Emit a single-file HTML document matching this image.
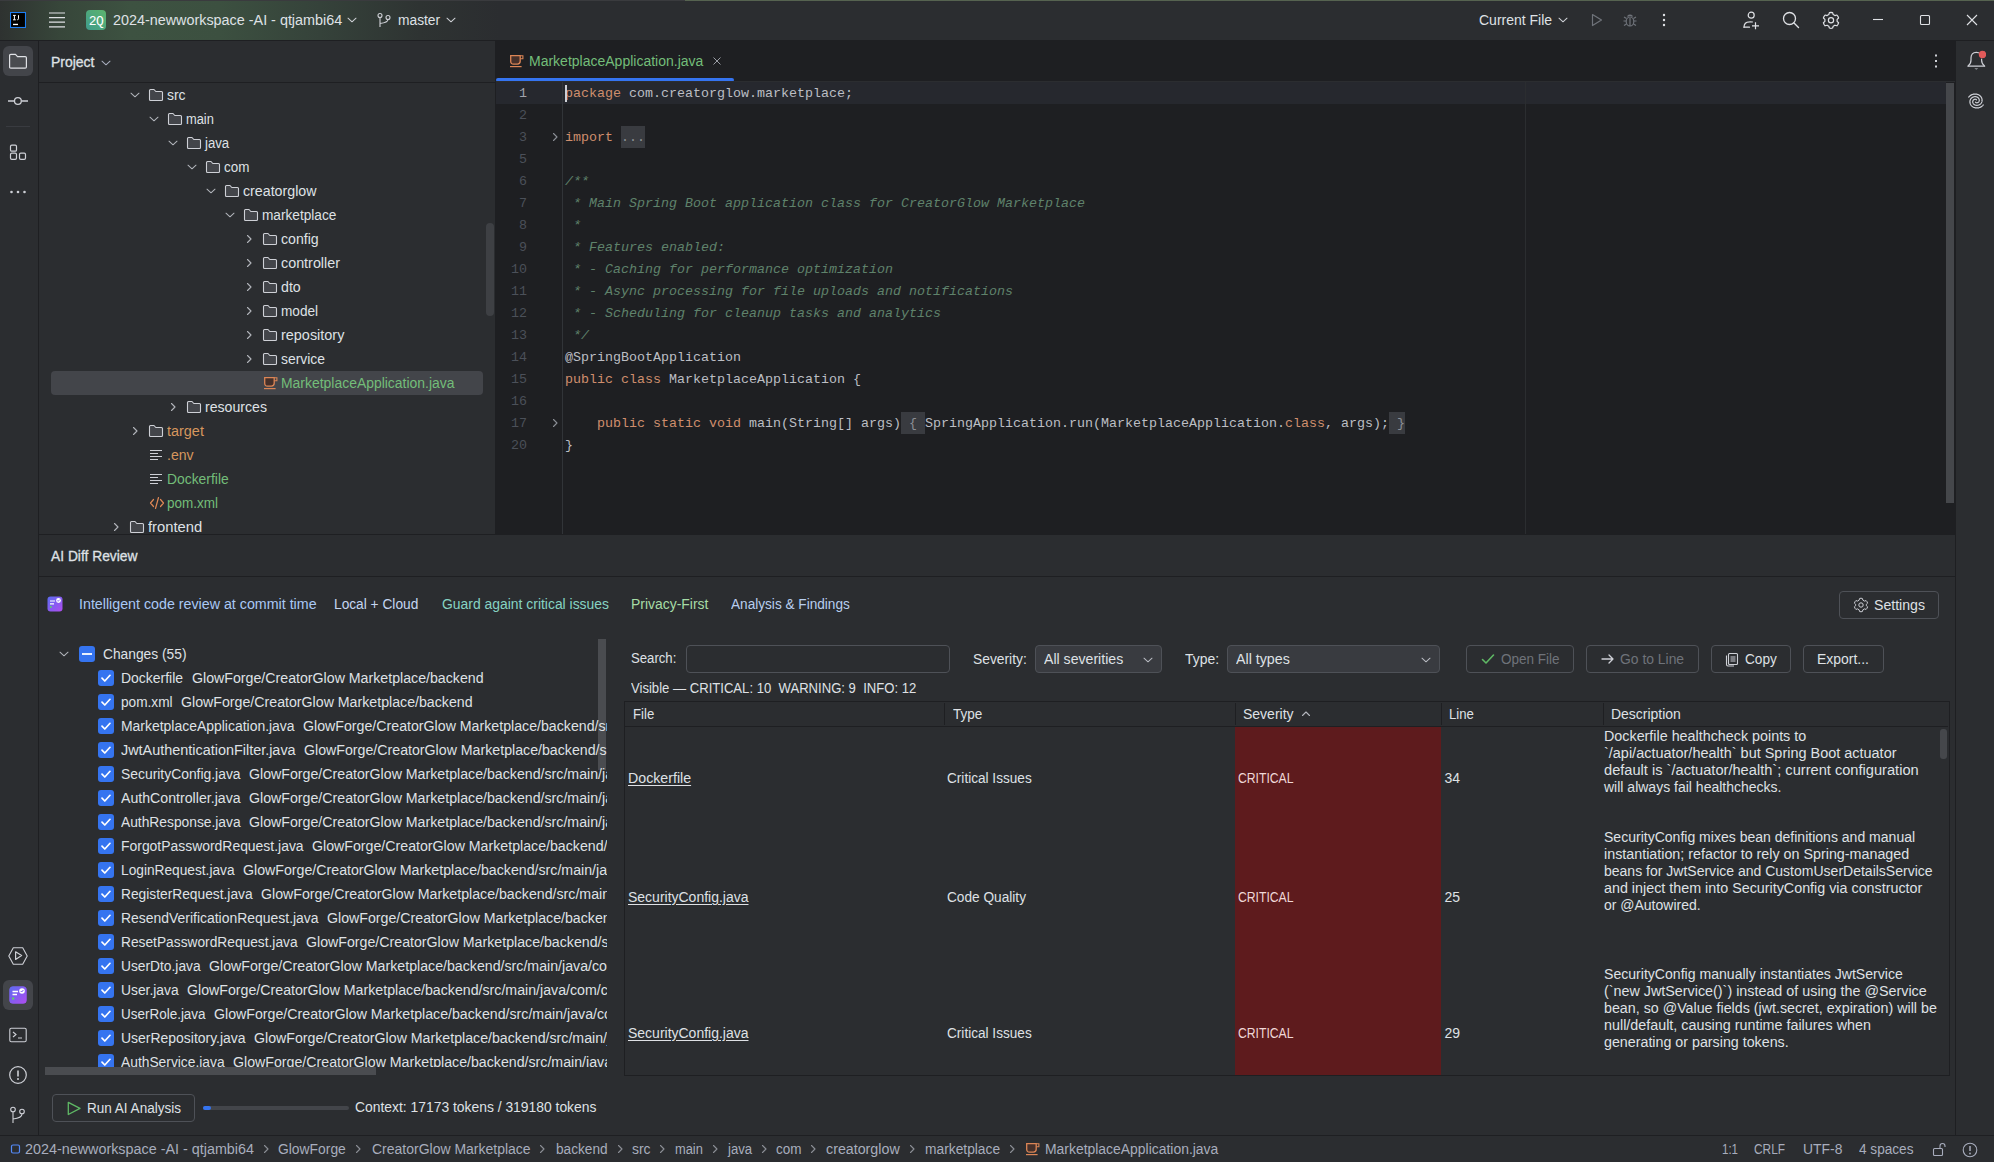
<!DOCTYPE html><html><head><meta charset="utf-8"><style>
html,body{margin:0;padding:0}
body{width:1994px;height:1162px;overflow:hidden;position:relative;background:#2B2D30;font-family:'Liberation Sans',sans-serif;font-size:14px;color:#DFE1E5}
.r{position:absolute;display:block}
.t{position:absolute;white-space:pre;line-height:20px;height:20px}
.m{position:absolute;white-space:pre;line-height:22px;height:22px;font-family:'Liberation Mono',monospace;font-size:13.33px}
u{text-decoration:underline;text-underline-offset:2px}
</style></head><body>
<div class="r" style="left:0;top:0;width:1994px;height:40px;background:linear-gradient(to right, #2E3230 0px, #37463A 60px, #3D5241 130px, #3C5040 220px, #35423A 320px, #2E3332 420px, #2B2D30 500px)"></div>
<div class="r" style="left:0px;top:40px;width:1994px;height:1px;background:#1E1F22;"></div>
<div class="r" style="left:0px;top:0px;width:685px;height:1px;background:#3A3B3E;"></div>
<div class="r" style="left:685px;top:0px;width:1309px;height:1px;background:#566350;"></div>
<svg class="r" style="left:10px;top:12px" width="16" height="16" viewBox="0 0 16 16" fill="none"><rect x="0.5" y="0.5" width="15" height="15" fill="#000" stroke="#1C7EF5" stroke-width="1.1"/><path d="M3 3.4 H5.8 M4.4 3.4 V7.8 M3 7.8 H5.8 M8.5 3.2 V6.8 Q8.5 7.8 7.3 7.8" stroke="#fff" stroke-width="1"/><rect x="3" y="11.8" width="5" height="1.3" fill="#fff"/></svg>
<svg class="r" style="left:49px;top:12px" width="16" height="16" viewBox="0 0 16 16" fill="none"><path d="M0 1 H16 M0 5.6 H16 M0 10.2 H16 M0 14.8 H16" stroke="#DFE1E5" stroke-width="1.2"/></svg>
<div class="r" style="left:86px;top:10px;width:20px;height:20px;border-radius:4px;background:linear-gradient(45deg,#3F9C8C,#5DB46D)"></div>
<div class="t" style="left:86px;top:11.5px;color:#FFFFFF;font-size:13px;width:20px;text-align:center;letter-spacing:-0.6px;font-family:Liberation Mono,monospace;">2Q</div>
<div class="t" id="f0" style="left:112.5px;top:10px;color:#DFE1E5;font-size:14px;;transform:scaleX(1.0262);transform-origin:0 50%;">2024-newworkspace -AI - qtjambi64</div>
<svg class="r" style="left:346px;top:14px" width="12" height="12" viewBox="0 0 12 12" fill="none"><path d="M2 4.2 L6 7.8 L10 4.2" stroke="#CED0D6" stroke-width="1.05" stroke-linecap="round" stroke-linejoin="round"/></svg>
<svg class="r" style="left:376px;top:12px" width="16" height="16" viewBox="0 0 16 16" fill="none"><circle cx="4" cy="3.5" r="2" stroke="#CED0D6" stroke-width="1.1"/><circle cx="12" cy="5.5" r="2" stroke="#CED0D6" stroke-width="1.1"/><path d="M4 5.5 V15 M12 7.5 Q12 10.5 4 11.5" stroke="#CED0D6" stroke-width="1.1"/></svg>
<div class="t" id="f1" style="left:398.4px;top:10px;color:#DFE1E5;font-size:14px;;transform:scaleX(0.9837);transform-origin:0 50%;">master</div>
<svg class="r" style="left:445px;top:14px" width="12" height="12" viewBox="0 0 12 12" fill="none"><path d="M2 4.2 L6 7.8 L10 4.2" stroke="#CED0D6" stroke-width="1.05" stroke-linecap="round" stroke-linejoin="round"/></svg>
<div class="t" style="left:1479px;top:10px;color:#DFE1E5;font-size:14px;;">Current File</div>
<svg class="r" style="left:1557px;top:14px" width="12" height="12" viewBox="0 0 12 12" fill="none"><path d="M2 4.2 L6 7.8 L10 4.2" stroke="#CED0D6" stroke-width="1.05" stroke-linecap="round" stroke-linejoin="round"/></svg>
<svg class="r" style="left:1588px;top:12px" width="16" height="16" viewBox="0 0 16 16" fill="none"><path d="M4.5 2.5 L13.5 8 L4.5 13.5 Z" stroke="#6F737A" stroke-width="1.2" stroke-linejoin="round"/></svg>
<svg class="r" style="left:1622px;top:12px" width="16" height="16" viewBox="0 0 16 16" fill="none"><ellipse cx="8" cy="9.5" rx="3.8" ry="4.5" stroke="#6F737A" stroke-width="1.2"/><path d="M5.5 4.5 Q8 2 10.5 4.5 M1.5 9 H4 M12 9 H14.5 M2 5 L4.5 6.5 M14 5 L11.5 6.5 M2 13.5 L4.5 12 M14 13.5 L11.5 12 M8 6 V14" stroke="#6F737A" stroke-width="1.2"/></svg>
<svg class="r" style="left:1656px;top:12px" width="16" height="16" viewBox="0 0 16 16" fill="none"><circle cx="8" cy="3" r="1.2" fill="#DFE1E5"/><circle cx="8" cy="8" r="1.2" fill="#DFE1E5"/><circle cx="8" cy="13" r="1.2" fill="#DFE1E5"/></svg>
<svg class="r" style="left:1742px;top:10px" width="20" height="20" viewBox="0 0 20 20" fill="none"><circle cx="9.2" cy="5.2" r="3" stroke="#DFE1E5" stroke-width="1.2"/><path d="M2 17.2 Q2 12 7.5 11.8 Q9 11.7 10.5 12" stroke="#DFE1E5" stroke-width="1.2" stroke-linecap="round"/><path d="M2 17.2 H7.5" stroke="#DFE1E5" stroke-width="1.2" stroke-linecap="round"/><path d="M10 15.8 H17 M13.5 12.3 V19.3" stroke="#DFE1E5" stroke-width="1.2"/></svg>
<svg class="r" style="left:1782px;top:11px" width="18" height="18" viewBox="0 0 18 18" fill="none"><circle cx="7.5" cy="7.5" r="6" stroke="#DFE1E5" stroke-width="1.3"/><path d="M12 12 L16.5 16.5" stroke="#DFE1E5" stroke-width="1.4" stroke-linecap="round"/></svg>
<svg class="r" style="left:1822px;top:11px" width="18" height="18" viewBox="0 0 18 18" fill="none"><path d="M9 1.3 L10.6 1.6 L11.2 3.6 L12.9 4.6 L14.9 4 L15.9 5.3 L16.6 7 L15.1 8.4 V10.4 L16.6 11.8 L15.9 13.5 L14.9 14.8 L12.9 14.2 L11.2 15.2 L10.6 17 L9 17.3 L7.4 17 L6.8 15.2 L5.1 14.2 L3.1 14.8 L2.1 13.5 L1.4 11.8 L2.9 10.4 V8.4 L1.4 7 L2.1 5.3 L3.1 4 L5.1 4.6 L6.8 3.6 L7.4 1.6 Z" stroke="#DFE1E5" stroke-width="1.2" stroke-linejoin="round"/><circle cx="9" cy="9.3" r="2.6" stroke="#DFE1E5" stroke-width="1.2"/></svg>
<svg class="r" style="left:1870px;top:12px" width="16" height="16" viewBox="0 0 16 16" fill="none"><path d="M3 7.5 H13" stroke="#DFE1E5" stroke-width="1.1"/></svg>
<svg class="r" style="left:1916px;top:12px" width="16" height="16" viewBox="0 0 16 16" fill="none"><rect x="4.5" y="3.5" width="9" height="9" rx="1" stroke="#DFE1E5" stroke-width="1.1"/></svg>
<svg class="r" style="left:1963px;top:12px" width="16" height="16" viewBox="0 0 16 16" fill="none"><path d="M4 3 L14 13 M14 3 L4 13" stroke="#DFE1E5" stroke-width="1.1"/></svg>
<div class="r" style="left:38px;top:41px;width:1px;height:1094px;background:#1E1F22;"></div>
<div class="r" style="left:3px;top:46px;width:30px;height:30px;background:#43454A;border-radius:6px"></div>
<svg class="r" style="left:9px;top:53px" width="18" height="16" viewBox="0 0 18 16" fill="none"><path d="M0.6 2.6 Q0.6 1.4 1.8 1.4 H6.5 L8.5 3.6 H16.2 Q17.4 3.6 17.4 4.8 V14 Q17.4 15.2 16.2 15.2 H1.8 Q0.6 15.2 0.6 14 Z" fill="#4A4C50" stroke="#DFE1E5" stroke-width="1.2" stroke-linejoin="round"/></svg>
<svg class="r" style="left:8px;top:93px" width="20" height="16" viewBox="0 0 20 16" fill="none"><path d="M0 8 H6.2 M13.6 8 H20" stroke="#CED0D6" stroke-width="1.3"/><circle cx="9.9" cy="8" r="3.4" stroke="#CED0D6" stroke-width="1.3"/></svg>
<div class="r" style="left:6px;top:126px;width:24px;height:1px;background:#393B40;"></div>
<svg class="r" style="left:9px;top:144px" width="18" height="17" viewBox="0 0 18 17" fill="none"><rect x="1.5" y="1.2" width="6" height="6" rx="1.3" stroke="#CED0D6" stroke-width="1.2"/><rect x="1.5" y="9.2" width="6" height="6.2" rx="1.3" stroke="#CED0D6" stroke-width="1.2"/><rect x="10.5" y="9.2" width="6" height="6.2" rx="1.3" stroke="#CED0D6" stroke-width="1.2"/></svg>
<svg class="r" style="left:9px;top:184px" width="20" height="16" viewBox="0 0 20 16" fill="none"><circle cx="2.5" cy="8" r="1.3" fill="#CED0D6"/><circle cx="9" cy="8" r="1.3" fill="#CED0D6"/><circle cx="15.5" cy="8" r="1.3" fill="#CED0D6"/></svg>
<svg class="r" style="left:8px;top:946px" width="20" height="20" viewBox="0 0 20 20" fill="none"><path d="M5.3 1.8 H14.7 L19.2 10 L14.7 18.2 H5.3 L0.8 10 Z" stroke="#CED0D6" stroke-width="1.1" stroke-linejoin="round"/><path d="M7.6 5.8 L13.6 9.6 L7.6 13.4 Z" stroke="#CED0D6" stroke-width="1.2" stroke-linejoin="round"/></svg>
<div class="r" style="left:3px;top:980px;width:30px;height:30px;background:#43454A;border-radius:6px"></div>
<svg class="r" style="left:9px;top:986px" width="18" height="18" viewBox="0 0 18 18" fill="none"><rect x="0.5" y="0.5" width="17" height="17" rx="3.5" fill="#8A5CF6"/><rect x="0.5" y="0.5" width="17" height="17" rx="3.5" fill="url(#g1)"/><defs><linearGradient id="g1" x1="0" y1="0" x2="1" y2="1"><stop offset="0" stop-color="#5B6CF0"/><stop offset="1" stop-color="#B04CF0"/></linearGradient></defs><path d="M3.5 5.5 H9 M3.5 8.5 H8" stroke="#fff" stroke-width="1.3"/><circle cx="13" cy="5" r="2.8" fill="#fff"/><path d="M11.7 5 L12.7 6 L14.4 4" stroke="#7B5CF0" stroke-width="1"/><circle cx="4.2" cy="12.5" r="1.2" fill="#5FD068"/></svg>
<svg class="r" style="left:9px;top:1027px" width="18" height="16" viewBox="0 0 18 16" fill="none"><rect x="0.8" y="1.3" width="16.4" height="13.4" rx="1.5" stroke="#CED0D6" stroke-width="1.1"/><path d="M4 5 L7 7.5 L4 10 M9 11 H13" stroke="#CED0D6" stroke-width="1.1"/></svg>
<svg class="r" style="left:9px;top:1066px" width="18" height="18" viewBox="0 0 18 18" fill="none"><circle cx="9" cy="9" r="8.3" stroke="#CED0D6" stroke-width="1.2"/><path d="M9 4.5 V10.5" stroke="#CED0D6" stroke-width="1.6"/><circle cx="9" cy="13" r="1" fill="#CED0D6"/></svg>
<svg class="r" style="left:9px;top:1106px" width="18" height="18" viewBox="0 0 18 18" fill="none"><circle cx="4" cy="3.5" r="2.3" stroke="#CED0D6" stroke-width="1.1"/><circle cx="13" cy="5.5" r="2.3" stroke="#CED0D6" stroke-width="1.1"/><path d="M4 6 V17 M13 8 Q13 12 4 13" stroke="#CED0D6" stroke-width="1.1"/></svg>
<div class="r" style="left:39px;top:41px;width:456px;height:494px;background:#2B2D30;"></div>
<div class="t" id="f2" style="left:51.3px;top:52px;color:#DFE1E5;font-size:14px;-webkit-text-stroke:0.3px #DFE1E5;transform:scaleX(0.9982);transform-origin:0 50%;">Project</div>
<svg class="r" style="left:100px;top:56.5px" width="12" height="12" viewBox="0 0 12 12" fill="none"><path d="M2 4.2 L6 7.8 L10 4.2" stroke="#A8ADBD" stroke-width="1.05" stroke-linecap="round" stroke-linejoin="round"/></svg>
<div class="r" style="left:39px;top:82px;width:456px;height:1px;background:#1E1F22;"></div>
<div class="r" style="left:51px;top:371px;width:432px;height:24px;background:#43454A;border-radius:4px"></div>
<div class="r" style="left:39px;top:83px;width:456px;height:451px;overflow:hidden">
<svg class="r" style="left:90px;top:6px" width="12" height="12" viewBox="0 0 12 12" fill="none"><path d="M2 4.2 L6 7.8 L10 4.2" stroke="#B2B5BB" stroke-width="1.05" stroke-linecap="round" stroke-linejoin="round"/></svg>
<svg class="r" style="left:109px;top:4px" width="16" height="16" viewBox="0 0 16 16" fill="none"><path d="M1.5 3.5 Q1.5 2.5 2.5 2.5 H6 L7.8 4.5 H13.5 Q14.5 4.5 14.5 5.5 V12.5 Q14.5 13.5 13.5 13.5 H2.5 Q1.5 13.5 1.5 12.5 Z" fill="#43454A" stroke="#CED0D6" stroke-width="1.1" stroke-linejoin="round"/></svg>
<div class="t" id="f3" style="left:128px;top:2px;color:#DFE1E5;font-size:14px;;transform:scaleX(0.9962);transform-origin:0 50%;">src</div>
<svg class="r" style="left:109px;top:30px" width="12" height="12" viewBox="0 0 12 12" fill="none"><path d="M2 4.2 L6 7.8 L10 4.2" stroke="#B2B5BB" stroke-width="1.05" stroke-linecap="round" stroke-linejoin="round"/></svg>
<svg class="r" style="left:128px;top:28px" width="16" height="16" viewBox="0 0 16 16" fill="none"><path d="M1.5 3.5 Q1.5 2.5 2.5 2.5 H6 L7.8 4.5 H13.5 Q14.5 4.5 14.5 5.5 V12.5 Q14.5 13.5 13.5 13.5 H2.5 Q1.5 13.5 1.5 12.5 Z" fill="#43454A" stroke="#CED0D6" stroke-width="1.1" stroke-linejoin="round"/></svg>
<div class="t" id="f4" style="left:147px;top:26px;color:#DFE1E5;font-size:14px;;transform:scaleX(0.9190);transform-origin:0 50%;">main</div>
<svg class="r" style="left:128px;top:54px" width="12" height="12" viewBox="0 0 12 12" fill="none"><path d="M2 4.2 L6 7.8 L10 4.2" stroke="#B2B5BB" stroke-width="1.05" stroke-linecap="round" stroke-linejoin="round"/></svg>
<svg class="r" style="left:147px;top:52px" width="16" height="16" viewBox="0 0 16 16" fill="none"><path d="M1.5 3.5 Q1.5 2.5 2.5 2.5 H6 L7.8 4.5 H13.5 Q14.5 4.5 14.5 5.5 V12.5 Q14.5 13.5 13.5 13.5 H2.5 Q1.5 13.5 1.5 12.5 Z" fill="#43454A" stroke="#CED0D6" stroke-width="1.1" stroke-linejoin="round"/></svg>
<div class="t" id="f5" style="left:166px;top:50px;color:#DFE1E5;font-size:14px;;transform:scaleX(0.9421);transform-origin:0 50%;">java</div>
<svg class="r" style="left:147px;top:78px" width="12" height="12" viewBox="0 0 12 12" fill="none"><path d="M2 4.2 L6 7.8 L10 4.2" stroke="#B2B5BB" stroke-width="1.05" stroke-linecap="round" stroke-linejoin="round"/></svg>
<svg class="r" style="left:166px;top:76px" width="16" height="16" viewBox="0 0 16 16" fill="none"><path d="M1.5 3.5 Q1.5 2.5 2.5 2.5 H6 L7.8 4.5 H13.5 Q14.5 4.5 14.5 5.5 V12.5 Q14.5 13.5 13.5 13.5 H2.5 Q1.5 13.5 1.5 12.5 Z" fill="#43454A" stroke="#CED0D6" stroke-width="1.1" stroke-linejoin="round"/></svg>
<div class="t" id="f6" style="left:185px;top:74px;color:#DFE1E5;font-size:14px;;transform:scaleX(0.9602);transform-origin:0 50%;">com</div>
<svg class="r" style="left:166px;top:102px" width="12" height="12" viewBox="0 0 12 12" fill="none"><path d="M2 4.2 L6 7.8 L10 4.2" stroke="#B2B5BB" stroke-width="1.05" stroke-linecap="round" stroke-linejoin="round"/></svg>
<svg class="r" style="left:185px;top:100px" width="16" height="16" viewBox="0 0 16 16" fill="none"><path d="M1.5 3.5 Q1.5 2.5 2.5 2.5 H6 L7.8 4.5 H13.5 Q14.5 4.5 14.5 5.5 V12.5 Q14.5 13.5 13.5 13.5 H2.5 Q1.5 13.5 1.5 12.5 Z" fill="#43454A" stroke="#CED0D6" stroke-width="1.1" stroke-linejoin="round"/></svg>
<div class="t" id="f7" style="left:204px;top:98px;color:#DFE1E5;font-size:14px;;transform:scaleX(1.0155);transform-origin:0 50%;">creatorglow</div>
<svg class="r" style="left:185px;top:126px" width="12" height="12" viewBox="0 0 12 12" fill="none"><path d="M2 4.2 L6 7.8 L10 4.2" stroke="#B2B5BB" stroke-width="1.05" stroke-linecap="round" stroke-linejoin="round"/></svg>
<svg class="r" style="left:204px;top:124px" width="16" height="16" viewBox="0 0 16 16" fill="none"><path d="M1.5 3.5 Q1.5 2.5 2.5 2.5 H6 L7.8 4.5 H13.5 Q14.5 4.5 14.5 5.5 V12.5 Q14.5 13.5 13.5 13.5 H2.5 Q1.5 13.5 1.5 12.5 Z" fill="#43454A" stroke="#CED0D6" stroke-width="1.1" stroke-linejoin="round"/></svg>
<div class="t" id="f8" style="left:223px;top:122px;color:#DFE1E5;font-size:14px;;transform:scaleX(0.9742);transform-origin:0 50%;">marketplace</div>
<svg class="r" style="left:204px;top:150px" width="12" height="12" viewBox="0 0 12 12" fill="none"><path d="M4.5 2.5 L8 6 L4.5 9.5" stroke="#B2B5BB" stroke-width="1.1" stroke-linecap="round" stroke-linejoin="round"/></svg>
<svg class="r" style="left:223px;top:148px" width="16" height="16" viewBox="0 0 16 16" fill="none"><path d="M1.5 3.5 Q1.5 2.5 2.5 2.5 H6 L7.8 4.5 H13.5 Q14.5 4.5 14.5 5.5 V12.5 Q14.5 13.5 13.5 13.5 H2.5 Q1.5 13.5 1.5 12.5 Z" fill="#43454A" stroke="#CED0D6" stroke-width="1.1" stroke-linejoin="round"/></svg>
<div class="t" id="f9" style="left:242px;top:146px;color:#DFE1E5;font-size:14px;;transform:scaleX(1.0091);transform-origin:0 50%;">config</div>
<svg class="r" style="left:204px;top:174px" width="12" height="12" viewBox="0 0 12 12" fill="none"><path d="M4.5 2.5 L8 6 L4.5 9.5" stroke="#B2B5BB" stroke-width="1.1" stroke-linecap="round" stroke-linejoin="round"/></svg>
<svg class="r" style="left:223px;top:172px" width="16" height="16" viewBox="0 0 16 16" fill="none"><path d="M1.5 3.5 Q1.5 2.5 2.5 2.5 H6 L7.8 4.5 H13.5 Q14.5 4.5 14.5 5.5 V12.5 Q14.5 13.5 13.5 13.5 H2.5 Q1.5 13.5 1.5 12.5 Z" fill="#43454A" stroke="#CED0D6" stroke-width="1.1" stroke-linejoin="round"/></svg>
<div class="t" id="f10" style="left:242px;top:170px;color:#DFE1E5;font-size:14px;;transform:scaleX(1.0244);transform-origin:0 50%;">controller</div>
<svg class="r" style="left:204px;top:198px" width="12" height="12" viewBox="0 0 12 12" fill="none"><path d="M4.5 2.5 L8 6 L4.5 9.5" stroke="#B2B5BB" stroke-width="1.1" stroke-linecap="round" stroke-linejoin="round"/></svg>
<svg class="r" style="left:223px;top:196px" width="16" height="16" viewBox="0 0 16 16" fill="none"><path d="M1.5 3.5 Q1.5 2.5 2.5 2.5 H6 L7.8 4.5 H13.5 Q14.5 4.5 14.5 5.5 V12.5 Q14.5 13.5 13.5 13.5 H2.5 Q1.5 13.5 1.5 12.5 Z" fill="#43454A" stroke="#CED0D6" stroke-width="1.1" stroke-linejoin="round"/></svg>
<div class="t" id="f11" style="left:242px;top:194px;color:#DFE1E5;font-size:14px;;transform:scaleX(1.0119);transform-origin:0 50%;">dto</div>
<svg class="r" style="left:204px;top:222px" width="12" height="12" viewBox="0 0 12 12" fill="none"><path d="M4.5 2.5 L8 6 L4.5 9.5" stroke="#B2B5BB" stroke-width="1.1" stroke-linecap="round" stroke-linejoin="round"/></svg>
<svg class="r" style="left:223px;top:220px" width="16" height="16" viewBox="0 0 16 16" fill="none"><path d="M1.5 3.5 Q1.5 2.5 2.5 2.5 H6 L7.8 4.5 H13.5 Q14.5 4.5 14.5 5.5 V12.5 Q14.5 13.5 13.5 13.5 H2.5 Q1.5 13.5 1.5 12.5 Z" fill="#43454A" stroke="#CED0D6" stroke-width="1.1" stroke-linejoin="round"/></svg>
<div class="t" id="f12" style="left:242px;top:218px;color:#DFE1E5;font-size:14px;;transform:scaleX(0.9727);transform-origin:0 50%;">model</div>
<svg class="r" style="left:204px;top:246px" width="12" height="12" viewBox="0 0 12 12" fill="none"><path d="M4.5 2.5 L8 6 L4.5 9.5" stroke="#B2B5BB" stroke-width="1.1" stroke-linecap="round" stroke-linejoin="round"/></svg>
<svg class="r" style="left:223px;top:244px" width="16" height="16" viewBox="0 0 16 16" fill="none"><path d="M1.5 3.5 Q1.5 2.5 2.5 2.5 H6 L7.8 4.5 H13.5 Q14.5 4.5 14.5 5.5 V12.5 Q14.5 13.5 13.5 13.5 H2.5 Q1.5 13.5 1.5 12.5 Z" fill="#43454A" stroke="#CED0D6" stroke-width="1.1" stroke-linejoin="round"/></svg>
<div class="t" id="f13" style="left:242px;top:242px;color:#DFE1E5;font-size:14px;;transform:scaleX(1.0314);transform-origin:0 50%;">repository</div>
<svg class="r" style="left:204px;top:270px" width="12" height="12" viewBox="0 0 12 12" fill="none"><path d="M4.5 2.5 L8 6 L4.5 9.5" stroke="#B2B5BB" stroke-width="1.1" stroke-linecap="round" stroke-linejoin="round"/></svg>
<svg class="r" style="left:223px;top:268px" width="16" height="16" viewBox="0 0 16 16" fill="none"><path d="M1.5 3.5 Q1.5 2.5 2.5 2.5 H6 L7.8 4.5 H13.5 Q14.5 4.5 14.5 5.5 V12.5 Q14.5 13.5 13.5 13.5 H2.5 Q1.5 13.5 1.5 12.5 Z" fill="#43454A" stroke="#CED0D6" stroke-width="1.1" stroke-linejoin="round"/></svg>
<div class="t" id="f14" style="left:242px;top:266px;color:#DFE1E5;font-size:14px;;transform:scaleX(0.9919);transform-origin:0 50%;">service</div>
<svg class="r" style="left:224px;top:292px" width="16" height="16" viewBox="0 0 16 16" fill="none"><path d="M1.7 2.7 H11.2 V8.3 Q11.2 11.1 8.4 11.1 H4.5 Q1.7 11.1 1.7 8.3 Z" stroke="#DB8556" stroke-width="1.3" fill="#45302A"/><path d="M11.2 2.7 H13.9 V5.7 H11.2" stroke="#DB8556" stroke-width="1.1"/><path d="M1 13.6 H12.6" stroke="#DB8556" stroke-width="1.2"/></svg>
<div class="t" id="f15" style="left:242px;top:290px;color:#73BD79;font-size:14px;;transform:scaleX(0.9952);transform-origin:0 50%;">MarketplaceApplication.java</div>
<svg class="r" style="left:128px;top:318px" width="12" height="12" viewBox="0 0 12 12" fill="none"><path d="M4.5 2.5 L8 6 L4.5 9.5" stroke="#B2B5BB" stroke-width="1.1" stroke-linecap="round" stroke-linejoin="round"/></svg>
<svg class="r" style="left:147px;top:316px" width="16" height="16" viewBox="0 0 16 16" fill="none"><path d="M1.5 3.5 Q1.5 2.5 2.5 2.5 H6 L7.8 4.5 H13.5 Q14.5 4.5 14.5 5.5 V12.5 Q14.5 13.5 13.5 13.5 H2.5 Q1.5 13.5 1.5 12.5 Z" fill="#43454A" stroke="#CED0D6" stroke-width="1.1" stroke-linejoin="round"/></svg>
<div class="t" id="f16" style="left:166px;top:314px;color:#DFE1E5;font-size:14px;;transform:scaleX(1.0086);transform-origin:0 50%;">resources</div>
<svg class="r" style="left:90px;top:342px" width="12" height="12" viewBox="0 0 12 12" fill="none"><path d="M4.5 2.5 L8 6 L4.5 9.5" stroke="#B2B5BB" stroke-width="1.1" stroke-linecap="round" stroke-linejoin="round"/></svg>
<svg class="r" style="left:109px;top:340px" width="16" height="16" viewBox="0 0 16 16" fill="none"><path d="M1.5 3.5 Q1.5 2.5 2.5 2.5 H6 L7.8 4.5 H13.5 Q14.5 4.5 14.5 5.5 V12.5 Q14.5 13.5 13.5 13.5 H2.5 Q1.5 13.5 1.5 12.5 Z" fill="#43454A" stroke="#CED0D6" stroke-width="1.1" stroke-linejoin="round"/></svg>
<div class="t" id="f17" style="left:128px;top:338px;color:#D6975E;font-size:14px;;transform:scaleX(1.0304);transform-origin:0 50%;">target</div>
<svg class="r" style="left:110px;top:364px" width="16" height="16" viewBox="0 0 16 16" fill="none"><path d="M1 3.5 H13 M1 6.5 H9 M1 9.5 H13 M1 12.5 H9" stroke="#CED0D6" stroke-width="1.1"/></svg>
<div class="t" id="f18" style="left:128px;top:362px;color:#D6975E;font-size:14px;;transform:scaleX(1.0050);transform-origin:0 50%;">.env</div>
<svg class="r" style="left:110px;top:388px" width="16" height="16" viewBox="0 0 16 16" fill="none"><path d="M1 3.5 H13 M1 6.5 H9 M1 9.5 H13 M1 12.5 H9" stroke="#CED0D6" stroke-width="1.1"/></svg>
<div class="t" id="f19" style="left:128px;top:386px;color:#73BD79;font-size:14px;;transform:scaleX(0.9912);transform-origin:0 50%;">Dockerfile</div>
<svg class="r" style="left:110px;top:412px" width="16" height="16" viewBox="0 0 16 16" fill="none"><path d="M4.5 4.5 L1.5 8 L4.5 11.5 M11.5 4.5 L14.5 8 L11.5 11.5 M9.5 2.5 L6.5 13.5" stroke="#E08855" stroke-width="1.2" stroke-linecap="round" stroke-linejoin="round"/></svg>
<div class="t" id="f20" style="left:128px;top:410px;color:#73BD79;font-size:14px;;transform:scaleX(0.9640);transform-origin:0 50%;">pom.xml</div>
<svg class="r" style="left:71px;top:438px" width="12" height="12" viewBox="0 0 12 12" fill="none"><path d="M4.5 2.5 L8 6 L4.5 9.5" stroke="#B2B5BB" stroke-width="1.1" stroke-linecap="round" stroke-linejoin="round"/></svg>
<svg class="r" style="left:90px;top:436px" width="16" height="16" viewBox="0 0 16 16" fill="none"><path d="M1.5 3.5 Q1.5 2.5 2.5 2.5 H6 L7.8 4.5 H13.5 Q14.5 4.5 14.5 5.5 V12.5 Q14.5 13.5 13.5 13.5 H2.5 Q1.5 13.5 1.5 12.5 Z" fill="#43454A" stroke="#CED0D6" stroke-width="1.1" stroke-linejoin="round"/></svg>
<div class="t" id="f21" style="left:109px;top:434px;color:#DFE1E5;font-size:14px;;transform:scaleX(1.0569);transform-origin:0 50%;">frontend</div>
</div>
<div class="r" style="left:486px;top:223px;width:8px;height:93px;background:#3E4044;border-radius:4px"></div>
<div class="r" style="left:495px;top:41px;width:1px;height:494px;background:#1E1F22;"></div>
<div class="r" style="left:496px;top:41px;width:1459px;height:494px;background:#1E1F22;"></div>
<svg class="r" style="left:509px;top:53px" width="16" height="16" viewBox="0 0 16 16" fill="none"><path d="M1.7 2.7 H11.2 V8.3 Q11.2 11.1 8.4 11.1 H4.5 Q1.7 11.1 1.7 8.3 Z" stroke="#DB8556" stroke-width="1.3" fill="#45302A"/><path d="M11.2 2.7 H13.9 V5.7 H11.2" stroke="#DB8556" stroke-width="1.1"/><path d="M1 13.6 H12.6" stroke="#DB8556" stroke-width="1.2"/></svg>
<div class="t" style="left:529px;top:51px;color:#73BD79;font-size:14px;;">MarketplaceApplication.java</div>
<svg class="r" style="left:711px;top:55px" width="12" height="12" viewBox="0 0 12 12" fill="none"><path d="M2.5 2.5 L9.5 9.5 M9.5 2.5 L2.5 9.5" stroke="#9A9DA5" stroke-width="1"/></svg>
<div class="r" style="left:496px;top:78px;width:238px;height:4px;background:#3574F0;border-radius:2px"></div>
<div class="r" style="left:496px;top:81px;width:1459px;height:1px;background:#2B2D30;"></div>
<svg class="r" style="left:1928px;top:53px" width="16" height="16" viewBox="0 0 16 16" fill="none"><rect x="7" y="1.5" width="2" height="2" fill="#CED0D6"/><rect x="7" y="7" width="2" height="2" fill="#CED0D6"/><rect x="7" y="12.5" width="2" height="2" fill="#CED0D6"/></svg>
<div class="r" style="left:496px;top:82px;width:1450px;height:22px;background:#26282E;"></div>
<div class="r" style="left:562px;top:82px;width:1px;height:452px;background:#313438;"></div>
<div class="r" style="left:1525px;top:82px;width:1px;height:452px;background:#2B2D30;"></div>
<div class="r" style="left:1946px;top:83px;width:8px;height:420px;background:#45474B;border-radius:0"></div>
<div class="m" style="left:480px;width:47px;text-align:right;top:83px;color:#A1A3AB">1</div>
<div class="m" style="left:480px;width:47px;text-align:right;top:105px;color:#4B5059">2</div>
<div class="m" style="left:480px;width:47px;text-align:right;top:127px;color:#4B5059">3</div>
<div class="m" style="left:480px;width:47px;text-align:right;top:149px;color:#4B5059">5</div>
<div class="m" style="left:480px;width:47px;text-align:right;top:171px;color:#4B5059">6</div>
<div class="m" style="left:480px;width:47px;text-align:right;top:193px;color:#4B5059">7</div>
<div class="m" style="left:480px;width:47px;text-align:right;top:215px;color:#4B5059">8</div>
<div class="m" style="left:480px;width:47px;text-align:right;top:237px;color:#4B5059">9</div>
<div class="m" style="left:480px;width:47px;text-align:right;top:259px;color:#4B5059">10</div>
<div class="m" style="left:480px;width:47px;text-align:right;top:281px;color:#4B5059">11</div>
<div class="m" style="left:480px;width:47px;text-align:right;top:303px;color:#4B5059">12</div>
<div class="m" style="left:480px;width:47px;text-align:right;top:325px;color:#4B5059">13</div>
<div class="m" style="left:480px;width:47px;text-align:right;top:347px;color:#4B5059">14</div>
<div class="m" style="left:480px;width:47px;text-align:right;top:369px;color:#4B5059">15</div>
<div class="m" style="left:480px;width:47px;text-align:right;top:391px;color:#4B5059">16</div>
<div class="m" style="left:480px;width:47px;text-align:right;top:413px;color:#4B5059">17</div>
<div class="m" style="left:480px;width:47px;text-align:right;top:435px;color:#4B5059">20</div>
<div class="m" style="left:565px;top:83px"><span style="color:#CF8E6D;">package</span><span style="color:#BCBEC4;"> com.creatorglow.marketplace;</span></div>
<div class="r" style="left:565px;top:85px;width:2px;height:17px;background:#CED0D6;"></div>
<div class="m" style="left:565px;top:127px"><span style="color:#CF8E6D;">import</span><span style="color:#BCBEC4;"> </span></div>
<div class="r" style="left:621px;top:126px;width:24px;height:22px;background:#393B40;"></div>
<div class="m" style="left:621px;top:127px"><span style="color:#8C8F96;">...</span></div>
<svg class="r" style="left:549px;top:131px" width="12" height="12" viewBox="0 0 12 12" fill="none"><path d="M4.5 2.5 L8 6 L4.5 9.5" stroke="#8C8F96" stroke-width="1.1" stroke-linecap="round" stroke-linejoin="round"/></svg>
<div class="m" style="left:565px;top:171px"><span style="color:#5F826B;font-style:italic;">/**</span></div>
<div class="m" style="left:565px;top:193px"><span style="color:#5F826B;font-style:italic;"> * Main Spring Boot application class for CreatorGlow Marketplace</span></div>
<div class="m" style="left:565px;top:215px"><span style="color:#5F826B;font-style:italic;"> *</span></div>
<div class="m" style="left:565px;top:237px"><span style="color:#5F826B;font-style:italic;"> * Features enabled:</span></div>
<div class="m" style="left:565px;top:259px"><span style="color:#5F826B;font-style:italic;"> * - Caching for performance optimization</span></div>
<div class="m" style="left:565px;top:281px"><span style="color:#5F826B;font-style:italic;"> * - Async processing for file uploads and notifications</span></div>
<div class="m" style="left:565px;top:303px"><span style="color:#5F826B;font-style:italic;"> * - Scheduling for cleanup tasks and analytics</span></div>
<div class="m" style="left:565px;top:325px"><span style="color:#5F826B;font-style:italic;"> */</span></div>
<div class="m" style="left:565px;top:347px"><span style="color:#BCBEC4;">@SpringBootApplication</span></div>
<div class="m" style="left:565px;top:369px"><span style="color:#CF8E6D;">public</span><span style="color:#BCBEC4;"> </span><span style="color:#CF8E6D;">class</span><span style="color:#BCBEC4;"> MarketplaceApplication {</span></div>
<div class="r" style="left:901px;top:412px;width:24px;height:22px;background:#393B40;"></div>
<div class="r" style="left:1389px;top:412px;width:16px;height:22px;background:#393B40;"></div>
<div class="m" style="left:565px;top:413px"><span style="color:#BCBEC4;">    </span><span style="color:#CF8E6D;">public</span><span style="color:#BCBEC4;"> </span><span style="color:#CF8E6D;">static</span><span style="color:#BCBEC4;"> </span><span style="color:#CF8E6D;">void</span><span style="color:#BCBEC4;"> main(String[] args) </span><span style="color:#8C8F96;">{</span><span style="color:#BCBEC4;"> SpringApplication.run(MarketplaceApplication.</span><span style="color:#CF8E6D;">class</span><span style="color:#BCBEC4;">, args);</span><span style="color:#8C8F96;"> }</span></div>
<svg class="r" style="left:549px;top:417px" width="12" height="12" viewBox="0 0 12 12" fill="none"><path d="M4.5 2.5 L8 6 L4.5 9.5" stroke="#8C8F96" stroke-width="1.1" stroke-linecap="round" stroke-linejoin="round"/></svg>
<div class="m" style="left:565px;top:435px"><span style="color:#BCBEC4;">}</span></div>
<div class="r" style="left:1955px;top:41px;width:1px;height:1094px;background:#1E1F22;"></div>
<div class="r" style="left:1956px;top:41px;width:38px;height:1094px;background:#2B2D30;"></div>
<svg class="r" style="left:1966px;top:50px" width="20" height="22" viewBox="0 0 20 22" fill="none"><path d="M2.3 15.8 Q5 13.8 5 10 V8 Q5 2.4 10.3 2.4 Q11.5 2.4 12.6 2.8 M15.6 9 V10 Q15.6 13.8 18.3 15.8" fill="none" stroke="#CED0D6" stroke-width="1.2" stroke-linejoin="round" stroke-linecap="round"/><path d="M2 16.2 H18.6" stroke="#CED0D6" stroke-width="1.3" stroke-linecap="round"/><path d="M8.3 18.6 Q10.3 20.2 12.3 18.6 Z" fill="#CED0D6"/><circle cx="16.5" cy="4.5" r="3.7" fill="#E25A5A"/></svg>
<svg class="r" style="left:1967px;top:92px" width="18" height="18" viewBox="0 0 18 18" fill="none"><path d="M1.73 5.09 L2.06 4.70 L2.41 4.33 L2.79 3.98 L3.19 3.66 L3.61 3.37 L4.04 3.10 L4.49 2.86 L4.95 2.65 L5.42 2.47 L5.90 2.33 L6.39 2.21 L6.88 2.12 L7.37 2.06 L7.86 2.03 L8.34 2.03 L8.83 2.06 L9.30 2.12 L9.77 2.20 L10.22 2.32 L10.67 2.45 L11.10 2.62 L11.51 2.81 L11.91 3.02 L12.29 3.25 L12.64 3.51 L12.98 3.78 L13.30 4.07 L13.59 4.37 L13.85 4.69 L14.09 5.02 L14.31 5.37 L14.50 5.72 L14.66 6.08 L14.80 6.45 L14.91 6.82 L14.99 7.19 L15.05 7.56 L15.08 7.94 L15.08 8.31 L15.06 8.67 L15.01 9.03 L14.94 9.39 L14.84 9.73 L14.72 10.07 L14.58 10.39 L14.42 10.70 L14.23 11.00 L14.03 11.28 L13.82 11.55 L13.58 11.80 L13.33 12.04 L13.07 12.25 L12.80 12.45 L12.51 12.63 L12.22 12.79 L11.92 12.93 L11.61 13.05 L11.30 13.14 L10.99 13.22 L10.68 13.28 L10.36 13.32 L10.05 13.34 L9.74 13.34 L9.43 13.32 L9.13 13.28 L8.84 13.23 L8.56 13.16 L8.28 13.07 L8.02 12.96 L7.76 12.85 L7.52 12.71 L7.29 12.57 L7.08 12.41 L6.88 12.24 L6.69 12.07 L6.52 11.88 L6.37 11.69 L6.23 11.49 L6.11 11.28 L6.01 11.07 L5.92 10.86 L5.85 10.65 L5.79 10.43 L5.75 10.22 L5.73 10.01 L5.73 9.80 L5.74 9.59 L5.76 9.39 L5.80 9.19 L5.85 9.00 L5.91 8.82 L5.99 8.64 L6.08 8.47 L6.18 8.31 L6.29 8.16 L6.40 8.02 L6.53 7.90 L6.66 7.78 L6.80 7.67 L6.94 7.57 L7.09 7.49 L7.24 7.42 L7.39 7.36 L7.54 7.31 L7.70 7.27 L7.85 7.24 L8.00 7.22 L8.15 7.22 L8.29 7.22 L8.43 7.23 L8.57 7.26 L8.70 7.29 L8.82 7.33 L8.94 7.37 L9.05 7.43 L9.15 7.49 L9.25 7.55 L9.33 7.62 L9.41 7.70 L9.48 7.78 M16.27 12.91 L15.94 13.30 L15.59 13.67 L15.21 14.02 L14.81 14.34 L14.39 14.63 L13.96 14.90 L13.51 15.14 L13.05 15.35 L12.58 15.53 L12.10 15.67 L11.61 15.79 L11.12 15.88 L10.63 15.94 L10.14 15.97 L9.66 15.97 L9.17 15.94 L8.70 15.88 L8.23 15.80 L7.78 15.68 L7.33 15.55 L6.90 15.38 L6.49 15.19 L6.09 14.98 L5.71 14.75 L5.36 14.49 L5.02 14.22 L4.70 13.93 L4.41 13.63 L4.15 13.31 L3.91 12.98 L3.69 12.63 L3.50 12.28 L3.34 11.92 L3.20 11.55 L3.09 11.18 L3.01 10.81 L2.95 10.44 L2.92 10.06 L2.92 9.69 L2.94 9.33 L2.99 8.97 L3.06 8.61 L3.16 8.27 L3.28 7.93 L3.42 7.61 L3.58 7.30 L3.77 7.00 L3.97 6.72 L4.18 6.45 L4.42 6.20 L4.67 5.96 L4.93 5.75 L5.20 5.55 L5.49 5.37 L5.78 5.21 L6.08 5.07 L6.39 4.95 L6.70 4.86 L7.01 4.78 L7.32 4.72 L7.64 4.68 L7.95 4.66 L8.26 4.66 L8.57 4.68 L8.87 4.72 L9.16 4.77 L9.44 4.84 L9.72 4.93 L9.98 5.04 L10.24 5.15 L10.48 5.29 L10.71 5.43 L10.92 5.59 L11.12 5.76 L11.31 5.93 L11.48 6.12 L11.63 6.31 L11.77 6.51 L11.89 6.72 L11.99 6.93 L12.08 7.14 L12.15 7.35 L12.21 7.57 L12.25 7.78 L12.27 7.99 L12.27 8.20 L12.26 8.41 L12.24 8.61 L12.20 8.81 L12.15 9.00 L12.09 9.18 L12.01 9.36 L11.92 9.53 L11.82 9.69 L11.71 9.84 L11.60 9.98 L11.47 10.10 L11.34 10.22 L11.20 10.33 L11.06 10.43 L10.91 10.51 L10.76 10.58 L10.61 10.64 L10.46 10.69 L10.30 10.73 L10.15 10.76 L10.00 10.78 L9.85 10.78 L9.71 10.78 L9.57 10.77 L9.43 10.74 L9.30 10.71 L9.18 10.67 L9.06 10.63 L8.95 10.57 L8.85 10.51 L8.75 10.45 L8.67 10.38 L8.59 10.30 L8.52 10.22" stroke="#CED0D6" stroke-width="1.2" stroke-linecap="round"/></svg>
<div class="r" style="left:39px;top:534px;width:1916px;height:1px;background:#1E1F22;"></div>
<div class="r" style="left:39px;top:535px;width:1916px;height:600px;background:#2B2D30;"></div>
<div class="t" id="f22" style="left:51px;top:546px;color:#DFE1E5;font-size:14px;-webkit-text-stroke:0.3px #DFE1E5;transform:scaleX(0.9866);transform-origin:0 50%;">AI Diff Review</div>
<div class="r" style="left:39px;top:576px;width:1916px;height:1px;background:#1E1F22;"></div>
<svg class="r" style="left:47px;top:596px" width="16" height="16" viewBox="0 0 16 16" fill="none"><defs><linearGradient id="g2" x1="0" y1="0" x2="1" y2="1"><stop offset="0" stop-color="#5B6CF0"/><stop offset="1" stop-color="#B04CF0"/></linearGradient></defs><rect x="0.5" y="0.5" width="15" height="15" rx="3" fill="url(#g2)"/><path d="M3 5 H8 M3 7.8 H7" stroke="#fff" stroke-width="1.2"/><circle cx="11.5" cy="4.5" r="2.4" fill="#fff"/><path d="M10.4 4.5 L11.2 5.3 L12.6 3.7" stroke="#7B5CF0" stroke-width="0.9"/><circle cx="3.8" cy="11" r="1" fill="#5FD068"/></svg>
<div class="t" id="f23" style="left:79.4px;top:594px;color:#A9C8F5;font-size:14px;;transform:scaleX(1.0178);transform-origin:0 50%;">Intelligent code review at commit time</div>
<div class="t" id="f24" style="left:334.2px;top:594px;color:#C5D6F2;font-size:14px;;transform:scaleX(0.9801);transform-origin:0 50%;">Local + Cloud</div>
<div class="t" id="f25" style="left:441.5px;top:594px;color:#86D3C3;font-size:14px;;transform:scaleX(0.9936);transform-origin:0 50%;">Guard againt critical issues</div>
<div class="t" id="f26" style="left:631px;top:594px;color:#A6DCA6;font-size:14px;;transform:scaleX(0.9951);transform-origin:0 50%;">Privacy-First</div>
<div class="t" id="f27" style="left:731.4px;top:594px;color:#B8CEEE;font-size:14px;;transform:scaleX(0.9724);transform-origin:0 50%;">Analysis &amp; Findings</div>
<div class="r" style="left:1839px;top:591px;width:98px;height:26px;border:1px solid #4E5157;border-radius:4px"></div>
<svg class="r" style="left:1853px;top:597px" width="16" height="16" viewBox="0 0 16 16" fill="none"><path d="M8 1.2 L9.4 1.5 L9.9 3.2 L11.4 4.1 L13.1 3.6 L14 4.7 L14.6 6.2 L13.3 7.4 V8.6 L14.6 9.8 L14 11.3 L13.1 12.4 L11.4 11.9 L9.9 12.8 L9.4 14.5 L8 14.8 L6.6 14.5 L6.1 12.8 L4.6 11.9 L2.9 12.4 L2 11.3 L1.4 9.8 L2.7 8.6 V7.4 L1.4 6.2 L2 4.7 L2.9 3.6 L4.6 4.1 L6.1 3.2 L6.6 1.5 Z" stroke="#CED0D6" stroke-width="1" stroke-linejoin="round"/><circle cx="8" cy="8" r="2.2" stroke="#CED0D6" stroke-width="1"/></svg>
<div class="t" id="f28" style="left:1873.5px;top:595px;color:#DFE1E5;font-size:14px;;transform:scaleX(1.0080);transform-origin:0 50%;">Settings</div>
<svg class="r" style="left:58px;top:648px" width="12" height="12" viewBox="0 0 12 12" fill="none"><path d="M2 4.2 L6 7.8 L10 4.2" stroke="#B2B5BB" stroke-width="1.05" stroke-linecap="round" stroke-linejoin="round"/></svg>
<svg class="r" style="left:79px;top:646px" width="16" height="16" viewBox="0 0 16 16" fill="none"><rect x="0" y="0" width="16" height="16" rx="3" fill="#3574F0"/><path d="M3 8 H13" stroke="#fff" stroke-width="1.8"/></svg>
<div class="t" id="f29" style="left:102.5px;top:644px;color:#DFE1E5;font-size:14px;;transform:scaleX(0.9843);transform-origin:0 50%;">Changes (55)</div>
<div class="r" style="left:598px;top:639px;width:8px;height:131px;background:#4A4C50;"></div>
<div class="r" style="left:39px;top:666px;width:568px;height:401px;overflow:hidden">
<svg class="r" style="left:59px;top:4px" width="16" height="16" viewBox="0 0 16 16" fill="none"><rect x="0" y="0" width="16" height="16" rx="3" fill="#3574F0"/><path d="M4 8.2 L6.8 11 L12 5.3" stroke="#fff" stroke-width="1.7" stroke-linecap="round" stroke-linejoin="round"/></svg>
<div class="t" id="f30" style="left:82.4px;top:2px;color:#DFE1E5;font-size:14px;;transform:scaleX(0.9976);transform-origin:0 50%;">Dockerfile</div>
<div class="t" id="f_pathref" style="left:153px;top:2px;color:#DFE1E5;transform:scaleX(1.0128);transform-origin:0 50%">GlowForge/CreatorGlow Marketplace/backend</div>
<svg class="r" style="left:59px;top:28px" width="16" height="16" viewBox="0 0 16 16" fill="none"><rect x="0" y="0" width="16" height="16" rx="3" fill="#3574F0"/><path d="M4 8.2 L6.8 11 L12 5.3" stroke="#fff" stroke-width="1.7" stroke-linecap="round" stroke-linejoin="round"/></svg>
<div class="t" id="f31" style="left:82.4px;top:26px;color:#DFE1E5;font-size:14px;;transform:scaleX(0.9753);transform-origin:0 50%;">pom.xml</div>
<div class="t" style="left:142px;top:26px;color:#DFE1E5;transform:scaleX(1.0128);transform-origin:0 50%">GlowForge/CreatorGlow Marketplace/backend</div>
<svg class="r" style="left:59px;top:52px" width="16" height="16" viewBox="0 0 16 16" fill="none"><rect x="0" y="0" width="16" height="16" rx="3" fill="#3574F0"/><path d="M4 8.2 L6.8 11 L12 5.3" stroke="#fff" stroke-width="1.7" stroke-linecap="round" stroke-linejoin="round"/></svg>
<div class="t" id="f32" style="left:82.4px;top:50px;color:#DFE1E5;font-size:14px;;transform:scaleX(0.9958);transform-origin:0 50%;">MarketplaceApplication.java</div>
<div class="t" style="left:264px;top:50px;color:#DFE1E5;transform:scaleX(1.0128);transform-origin:0 50%">GlowForge/CreatorGlow Marketplace/backend/src/main/java/com/creatorglow/marketplace</div>
<svg class="r" style="left:59px;top:76px" width="16" height="16" viewBox="0 0 16 16" fill="none"><rect x="0" y="0" width="16" height="16" rx="3" fill="#3574F0"/><path d="M4 8.2 L6.8 11 L12 5.3" stroke="#fff" stroke-width="1.7" stroke-linecap="round" stroke-linejoin="round"/></svg>
<div class="t" id="f33" style="left:82.4px;top:74px;color:#DFE1E5;font-size:14px;;transform:scaleX(1.0292);transform-origin:0 50%;">JwtAuthenticationFilter.java</div>
<div class="t" style="left:265px;top:74px;color:#DFE1E5;transform:scaleX(1.0128);transform-origin:0 50%">GlowForge/CreatorGlow Marketplace/backend/src/main/java/com/creatorglow/marketplace</div>
<svg class="r" style="left:59px;top:100px" width="16" height="16" viewBox="0 0 16 16" fill="none"><rect x="0" y="0" width="16" height="16" rx="3" fill="#3574F0"/><path d="M4 8.2 L6.8 11 L12 5.3" stroke="#fff" stroke-width="1.7" stroke-linecap="round" stroke-linejoin="round"/></svg>
<div class="t" id="f34" style="left:82.4px;top:98px;color:#DFE1E5;font-size:14px;;transform:scaleX(0.9915);transform-origin:0 50%;">SecurityConfig.java</div>
<div class="t" style="left:210px;top:98px;color:#DFE1E5;transform:scaleX(1.0128);transform-origin:0 50%">GlowForge/CreatorGlow Marketplace/backend/src/main/java/com/creatorglow</div>
<svg class="r" style="left:59px;top:124px" width="16" height="16" viewBox="0 0 16 16" fill="none"><rect x="0" y="0" width="16" height="16" rx="3" fill="#3574F0"/><path d="M4 8.2 L6.8 11 L12 5.3" stroke="#fff" stroke-width="1.7" stroke-linecap="round" stroke-linejoin="round"/></svg>
<div class="t" id="f35" style="left:82.4px;top:122px;color:#DFE1E5;font-size:14px;;transform:scaleX(1.0110);transform-origin:0 50%;">AuthController.java</div>
<div class="t" style="left:210px;top:122px;color:#DFE1E5;transform:scaleX(1.0128);transform-origin:0 50%">GlowForge/CreatorGlow Marketplace/backend/src/main/java/com/creatorglow</div>
<svg class="r" style="left:59px;top:148px" width="16" height="16" viewBox="0 0 16 16" fill="none"><rect x="0" y="0" width="16" height="16" rx="3" fill="#3574F0"/><path d="M4 8.2 L6.8 11 L12 5.3" stroke="#fff" stroke-width="1.7" stroke-linecap="round" stroke-linejoin="round"/></svg>
<div class="t" id="f36" style="left:82.4px;top:146px;color:#DFE1E5;font-size:14px;;transform:scaleX(0.9850);transform-origin:0 50%;">AuthResponse.java</div>
<div class="t" style="left:210px;top:146px;color:#DFE1E5;transform:scaleX(1.0128);transform-origin:0 50%">GlowForge/CreatorGlow Marketplace/backend/src/main/java/com/creatorglow</div>
<svg class="r" style="left:59px;top:172px" width="16" height="16" viewBox="0 0 16 16" fill="none"><rect x="0" y="0" width="16" height="16" rx="3" fill="#3574F0"/><path d="M4 8.2 L6.8 11 L12 5.3" stroke="#fff" stroke-width="1.7" stroke-linecap="round" stroke-linejoin="round"/></svg>
<div class="t" id="f37" style="left:82.4px;top:170px;color:#DFE1E5;font-size:14px;;transform:scaleX(0.9942);transform-origin:0 50%;">ForgotPasswordRequest.java</div>
<div class="t" style="left:273px;top:170px;color:#DFE1E5;transform:scaleX(1.0128);transform-origin:0 50%">GlowForge/CreatorGlow Marketplace/backend/src/main/java/com/creatorglow</div>
<svg class="r" style="left:59px;top:196px" width="16" height="16" viewBox="0 0 16 16" fill="none"><rect x="0" y="0" width="16" height="16" rx="3" fill="#3574F0"/><path d="M4 8.2 L6.8 11 L12 5.3" stroke="#fff" stroke-width="1.7" stroke-linecap="round" stroke-linejoin="round"/></svg>
<div class="t" id="f38" style="left:82.4px;top:194px;color:#DFE1E5;font-size:14px;;transform:scaleX(0.9794);transform-origin:0 50%;">LoginRequest.java</div>
<div class="t" style="left:204px;top:194px;color:#DFE1E5;transform:scaleX(1.0128);transform-origin:0 50%">GlowForge/CreatorGlow Marketplace/backend/src/main/java/com/creatorglow</div>
<svg class="r" style="left:59px;top:220px" width="16" height="16" viewBox="0 0 16 16" fill="none"><rect x="0" y="0" width="16" height="16" rx="3" fill="#3574F0"/><path d="M4 8.2 L6.8 11 L12 5.3" stroke="#fff" stroke-width="1.7" stroke-linecap="round" stroke-linejoin="round"/></svg>
<div class="t" id="f39" style="left:82.4px;top:218px;color:#DFE1E5;font-size:14px;;transform:scaleX(0.9831);transform-origin:0 50%;">RegisterRequest.java</div>
<div class="t" style="left:222px;top:218px;color:#DFE1E5;transform:scaleX(1.0128);transform-origin:0 50%">GlowForge/CreatorGlow Marketplace/backend/src/main/java/com/creatorglow</div>
<svg class="r" style="left:59px;top:244px" width="16" height="16" viewBox="0 0 16 16" fill="none"><rect x="0" y="0" width="16" height="16" rx="3" fill="#3574F0"/><path d="M4 8.2 L6.8 11 L12 5.3" stroke="#fff" stroke-width="1.7" stroke-linecap="round" stroke-linejoin="round"/></svg>
<div class="t" id="f40" style="left:82.4px;top:242px;color:#DFE1E5;font-size:14px;;transform:scaleX(0.9956);transform-origin:0 50%;">ResendVerificationRequest.java</div>
<div class="t" style="left:288px;top:242px;color:#DFE1E5;transform:scaleX(1.0128);transform-origin:0 50%">GlowForge/CreatorGlow Marketplace/backend/src/main/java/com/creatorglow</div>
<svg class="r" style="left:59px;top:268px" width="16" height="16" viewBox="0 0 16 16" fill="none"><rect x="0" y="0" width="16" height="16" rx="3" fill="#3574F0"/><path d="M4 8.2 L6.8 11 L12 5.3" stroke="#fff" stroke-width="1.7" stroke-linecap="round" stroke-linejoin="round"/></svg>
<div class="t" id="f41" style="left:82.4px;top:266px;color:#DFE1E5;font-size:14px;;transform:scaleX(0.9824);transform-origin:0 50%;">ResetPasswordRequest.java</div>
<div class="t" style="left:267px;top:266px;color:#DFE1E5;transform:scaleX(1.0128);transform-origin:0 50%">GlowForge/CreatorGlow Marketplace/backend/src/main/java/com/creatorglow</div>
<svg class="r" style="left:59px;top:292px" width="16" height="16" viewBox="0 0 16 16" fill="none"><rect x="0" y="0" width="16" height="16" rx="3" fill="#3574F0"/><path d="M4 8.2 L6.8 11 L12 5.3" stroke="#fff" stroke-width="1.7" stroke-linecap="round" stroke-linejoin="round"/></svg>
<div class="t" id="f42" style="left:82.4px;top:290px;color:#DFE1E5;font-size:14px;;transform:scaleX(0.9837);transform-origin:0 50%;">UserDto.java</div>
<div class="t" style="left:170px;top:290px;color:#DFE1E5;transform:scaleX(1.0128);transform-origin:0 50%">GlowForge/CreatorGlow Marketplace/backend/src/main/java/com/creatorglow</div>
<svg class="r" style="left:59px;top:316px" width="16" height="16" viewBox="0 0 16 16" fill="none"><rect x="0" y="0" width="16" height="16" rx="3" fill="#3574F0"/><path d="M4 8.2 L6.8 11 L12 5.3" stroke="#fff" stroke-width="1.7" stroke-linecap="round" stroke-linejoin="round"/></svg>
<div class="t" id="f43" style="left:82.4px;top:314px;color:#DFE1E5;font-size:14px;;transform:scaleX(0.9870);transform-origin:0 50%;">User.java</div>
<div class="t" style="left:148px;top:314px;color:#DFE1E5;transform:scaleX(1.0128);transform-origin:0 50%">GlowForge/CreatorGlow Marketplace/backend/src/main/java/com/creatorglow</div>
<svg class="r" style="left:59px;top:340px" width="16" height="16" viewBox="0 0 16 16" fill="none"><rect x="0" y="0" width="16" height="16" rx="3" fill="#3574F0"/><path d="M4 8.2 L6.8 11 L12 5.3" stroke="#fff" stroke-width="1.7" stroke-linecap="round" stroke-linejoin="round"/></svg>
<div class="t" id="f44" style="left:82.4px;top:338px;color:#DFE1E5;font-size:14px;;transform:scaleX(0.9620);transform-origin:0 50%;">UserRole.java</div>
<div class="t" style="left:175px;top:338px;color:#DFE1E5;transform:scaleX(1.0128);transform-origin:0 50%">GlowForge/CreatorGlow Marketplace/backend/src/main/java/com/creatorglow</div>
<svg class="r" style="left:59px;top:364px" width="16" height="16" viewBox="0 0 16 16" fill="none"><rect x="0" y="0" width="16" height="16" rx="3" fill="#3574F0"/><path d="M4 8.2 L6.8 11 L12 5.3" stroke="#fff" stroke-width="1.7" stroke-linecap="round" stroke-linejoin="round"/></svg>
<div class="t" id="f45" style="left:82.4px;top:362px;color:#DFE1E5;font-size:14px;;transform:scaleX(0.9967);transform-origin:0 50%;">UserRepository.java</div>
<div class="t" style="left:215px;top:362px;color:#DFE1E5;transform:scaleX(1.0128);transform-origin:0 50%">GlowForge/CreatorGlow Marketplace/backend/src/main/java/com/creatorglow</div>
<svg class="r" style="left:59px;top:388px" width="16" height="16" viewBox="0 0 16 16" fill="none"><rect x="0" y="0" width="16" height="16" rx="3" fill="#3574F0"/><path d="M4 8.2 L6.8 11 L12 5.3" stroke="#fff" stroke-width="1.7" stroke-linecap="round" stroke-linejoin="round"/></svg>
<div class="t" id="f46" style="left:82.4px;top:386px;color:#DFE1E5;font-size:14px;;transform:scaleX(0.9861);transform-origin:0 50%;">AuthService.java</div>
<div class="t" style="left:194px;top:386px;color:#DFE1E5;transform:scaleX(1.0128);transform-origin:0 50%">GlowForge/CreatorGlow Marketplace/backend/src/main/java/com/creatorglow</div>
</div>
<div class="r" style="left:45px;top:1067px;width:331px;height:8px;background:#4A4C50;"></div>
<div class="r" style="left:52px;top:1094px;width:141px;height:26px;border:1px solid #4E5157;border-radius:4px"></div>
<svg class="r" style="left:66px;top:1100px" width="16" height="16" viewBox="0 0 16 16" fill="none"><path d="M2.3 2.3 L14 8.4 L2.3 14.5 Z" stroke="#5FB865" stroke-width="1.3" stroke-linejoin="round"/></svg>
<div class="t" id="f47" style="left:86.5px;top:1098px;color:#DFE1E5;font-size:14px;;transform:scaleX(0.9663);transform-origin:0 50%;">Run AI Analysis</div>
<div class="r" style="left:203px;top:1106px;width:146px;height:4px;background:#43454A;border-radius:2px"></div>
<div class="r" style="left:203px;top:1106px;width:8px;height:4px;background:#3574F0;border-radius:2px"></div>
<div class="t" id="f48" style="left:354.7px;top:1097px;color:#DFE1E5;font-size:14px;;transform:scaleX(0.9909);transform-origin:0 50%;">Context: 17173 tokens / 319180 tokens</div>
<div class="t" id="f49" style="left:630.8px;top:648px;color:#DFE1E5;font-size:14px;;transform:scaleX(0.9389);transform-origin:0 50%;">Search:</div>
<div class="r" style="left:686px;top:645px;width:262px;height:26px;border:1px solid #4E5157;border-radius:4px;background:#2B2D30"></div>
<div class="t" id="f50" style="left:973.4px;top:649px;color:#DFE1E5;font-size:14px;;transform:scaleX(0.9877);transform-origin:0 50%;">Severity:</div>
<div class="r" style="left:1035px;top:645px;width:125px;height:26px;border:1px solid #4E5157;border-radius:4px;background:#393B40"></div>
<div class="t" id="f51" style="left:1044px;top:649px;color:#DFE1E5;font-size:14px;;transform:scaleX(1.0077);transform-origin:0 50%;">All severities</div>
<svg class="r" style="left:1142px;top:654px" width="12" height="12" viewBox="0 0 12 12" fill="none"><path d="M2 4.2 L6 7.8 L10 4.2" stroke="#B8BBC2" stroke-width="1.05" stroke-linecap="round" stroke-linejoin="round"/></svg>
<div class="t" id="f52" style="left:1185.4px;top:649px;color:#DFE1E5;font-size:14px;;transform:scaleX(0.9927);transform-origin:0 50%;">Type:</div>
<div class="r" style="left:1227px;top:645px;width:211px;height:26px;border:1px solid #4E5157;border-radius:4px;background:#393B40"></div>
<div class="t" id="f53" style="left:1235.9px;top:649px;color:#DFE1E5;font-size:14px;;transform:scaleX(1.0166);transform-origin:0 50%;">All types</div>
<svg class="r" style="left:1419.5px;top:654px" width="12" height="12" viewBox="0 0 12 12" fill="none"><path d="M2 4.2 L6 7.8 L10 4.2" stroke="#B8BBC2" stroke-width="1.05" stroke-linecap="round" stroke-linejoin="round"/></svg>
<div class="r" style="left:1466px;top:645px;width:106px;height:26px;border:1px solid #4E5157;border-radius:4px"></div>
<div class="t" id="f54" style="left:1500.6px;top:649px;color:#6F737A;font-size:14px;;transform:scaleX(0.9654);transform-origin:0 50%;">Open File</div>
<svg class="r" style="left:1480px;top:651px" width="16" height="16" viewBox="0 0 16 16" fill="none"><path d="M2.5 8.5 L6 12 L13.5 4" stroke="#5FB865" stroke-width="1.6" stroke-linecap="round" stroke-linejoin="round"/></svg>
<div class="r" style="left:1586px;top:645px;width:111px;height:26px;border:1px solid #4E5157;border-radius:4px"></div>
<div class="t" id="f55" style="left:1620.3px;top:649px;color:#6F737A;font-size:14px;;transform:scaleX(0.9921);transform-origin:0 50%;">Go to Line</div>
<svg class="r" style="left:1600px;top:651px" width="16" height="16" viewBox="0 0 16 16" fill="none"><path d="M2 8 H13 M9 4 L13 8 L9 12" stroke="#CED0D6" stroke-width="1.3" stroke-linecap="round" stroke-linejoin="round"/></svg>
<div class="r" style="left:1711px;top:645px;width:78px;height:26px;border:1px solid #4E5157;border-radius:4px"></div>
<div class="t" id="f56" style="left:1744.8px;top:649px;color:#DFE1E5;font-size:14px;;transform:scaleX(0.9728);transform-origin:0 50%;">Copy</div>
<svg class="r" style="left:1724px;top:651px" width="16" height="16" viewBox="0 0 16 16" fill="none"><rect x="4.5" y="2.5" width="9" height="11" rx="1" stroke="#CED0D6" stroke-width="1.1"/><path d="M2.5 4.5 V13.5 Q2.5 15 4 15 H10" stroke="#CED0D6" stroke-width="1.1"/><path d="M6.5 6 H11.5 M6.5 8 H11.5 M6.5 10 H11.5" stroke="#CED0D6" stroke-width="1"/></svg>
<div class="r" style="left:1803px;top:645px;width:79px;height:26px;border:1px solid #4E5157;border-radius:4px"></div>
<div class="t" id="f57" style="left:1817.3px;top:649px;color:#DFE1E5;font-size:14px;;transform:scaleX(0.9954);transform-origin:0 50%;">Export...</div>
<div class="t" id="f58" style="left:630.8px;top:678px;color:#DFE1E5;font-size:14px;;transform:scaleX(0.9355);transform-origin:0 50%;">Visible — CRITICAL: 10  WARNING: 9  INFO: 12</div>
<div class="r" style="left:624px;top:701px;width:1324px;height:373px;border:1px solid #1E1F22;background:#2B2D30"></div>
<div class="r" style="left:625px;top:726px;width:1323px;height:1px;background:#1E1F22;"></div>
<div class="r" style="left:944px;top:703px;width:1px;height:22px;background:#1E1F22;"></div>
<div class="r" style="left:1235px;top:703px;width:1px;height:22px;background:#1E1F22;"></div>
<div class="r" style="left:1441px;top:703px;width:1px;height:22px;background:#1E1F22;"></div>
<div class="r" style="left:1603px;top:703px;width:1px;height:22px;background:#1E1F22;"></div>
<div class="t" id="f59" style="left:633.2px;top:704px;color:#DFE1E5;font-size:14px;;transform:scaleX(0.9396);transform-origin:0 50%;">File</div>
<div class="t" id="f60" style="left:953px;top:704px;color:#DFE1E5;font-size:14px;;transform:scaleX(0.9651);transform-origin:0 50%;">Type</div>
<div class="t" style="left:1243px;top:704px;color:#DFE1E5;font-size:14px;;">Severity</div>
<svg class="r" style="left:1300px;top:708px" width="12" height="12" viewBox="0 0 12 12" fill="none"><path d="M2.5 7.5 L6 4 L9.5 7.5" stroke="#B4B7BE" stroke-width="1.1" stroke-linecap="round" stroke-linejoin="round"/></svg>
<div class="t" id="f61" style="left:1449.2px;top:704px;color:#DFE1E5;font-size:14px;;transform:scaleX(0.9407);transform-origin:0 50%;">Line</div>
<div class="t" id="f62" style="left:1611.4px;top:704px;color:#DFE1E5;font-size:14px;;transform:scaleX(0.9981);transform-origin:0 50%;">Description</div>
<div class="r" style="left:1235px;top:727px;width:206px;height:348px;background:#5E1B1D;"></div>
<div class="t" id="f63" style="left:628px;top:768px;color:#DFE1E5;font-size:14px;;transform:scaleX(1.0137);transform-origin:0 50%;"><u>Dockerfile</u></div>
<div class="t" id="f64" style="left:947.4px;top:768px;color:#DFE1E5;font-size:14px;;transform:scaleX(0.9720);transform-origin:0 50%;">Critical Issues</div>
<div class="t" id="f65" style="left:1238.3px;top:768px;color:#F0D8D8;font-size:14px;;transform:scaleX(0.8699);transform-origin:0 50%;">CRITICAL</div>
<div class="t" style="left:1444.5px;top:768px;color:#DFE1E5;font-size:14px;;">34</div>
<div class="t" id="f66" style="left:1603.5px;top:725.5999999999999px;color:#DFE1E5;font-size:14px;;transform:scaleX(1.0229);transform-origin:0 50%;">Dockerfile healthcheck points to</div>
<div class="t" id="f67" style="left:1603.5px;top:742.5999999999999px;color:#DFE1E5;font-size:14px;;transform:scaleX(1.0325);transform-origin:0 50%;">`/api/actuator/health` but Spring Boot actuator</div>
<div class="t" id="f68" style="left:1603.5px;top:759.5999999999999px;color:#DFE1E5;font-size:14px;;transform:scaleX(1.0449);transform-origin:0 50%;">default is `/actuator/health`; current configuration</div>
<div class="t" id="f69" style="left:1603.5px;top:776.5999999999999px;color:#DFE1E5;font-size:14px;;transform:scaleX(1.0005);transform-origin:0 50%;">will always fail healthchecks.</div>
<div class="t" id="f70" style="left:628px;top:887px;color:#DFE1E5;font-size:14px;;transform:scaleX(0.9990);transform-origin:0 50%;"><u>SecurityConfig.java</u></div>
<div class="t" id="f71" style="left:947.4px;top:887px;color:#DFE1E5;font-size:14px;;transform:scaleX(0.9761);transform-origin:0 50%;">Code Quality</div>
<div class="t" id="f72" style="left:1238.3px;top:887px;color:#F0D8D8;font-size:14px;;transform:scaleX(0.8699);transform-origin:0 50%;">CRITICAL</div>
<div class="t" style="left:1444.5px;top:887px;color:#DFE1E5;font-size:14px;;">25</div>
<div class="t" id="f73" style="left:1603.5px;top:827.4px;color:#DFE1E5;font-size:14px;;transform:scaleX(1.0019);transform-origin:0 50%;">SecurityConfig mixes bean definitions and manual</div>
<div class="t" id="f74" style="left:1603.5px;top:844.4px;color:#DFE1E5;font-size:14px;;transform:scaleX(1.0213);transform-origin:0 50%;">instantiation; refactor to rely on Spring-managed</div>
<div class="t" id="f75" style="left:1603.5px;top:861.4px;color:#DFE1E5;font-size:14px;;transform:scaleX(1.0007);transform-origin:0 50%;">beans for JwtService and CustomUserDetailsService</div>
<div class="t" id="f76" style="left:1603.5px;top:878.4px;color:#DFE1E5;font-size:14px;;transform:scaleX(1.0226);transform-origin:0 50%;">and inject them into SecurityConfig via constructor</div>
<div class="t" id="f77" style="left:1603.5px;top:895.4px;color:#DFE1E5;font-size:14px;;transform:scaleX(0.9989);transform-origin:0 50%;">or @Autowired.</div>
<div class="t" id="f78" style="left:628px;top:1023px;color:#DFE1E5;font-size:14px;;transform:scaleX(0.9990);transform-origin:0 50%;"><u>SecurityConfig.java</u></div>
<div class="t" id="f79" style="left:947.4px;top:1023px;color:#DFE1E5;font-size:14px;;transform:scaleX(0.9720);transform-origin:0 50%;">Critical Issues</div>
<div class="t" id="f80" style="left:1238.3px;top:1023px;color:#F0D8D8;font-size:14px;;transform:scaleX(0.8699);transform-origin:0 50%;">CRITICAL</div>
<div class="t" style="left:1444.5px;top:1023px;color:#DFE1E5;font-size:14px;;">29</div>
<div class="t" id="f81" style="left:1603.5px;top:963.5px;color:#DFE1E5;font-size:14px;;transform:scaleX(1.0052);transform-origin:0 50%;">SecurityConfig manually instantiates JwtService</div>
<div class="t" id="f82" style="left:1603.5px;top:980.5px;color:#DFE1E5;font-size:14px;;transform:scaleX(1.0234);transform-origin:0 50%;">(`new JwtService()`) instead of using the @Service</div>
<div class="t" id="f83" style="left:1603.5px;top:997.5px;color:#DFE1E5;font-size:14px;;transform:scaleX(1.0185);transform-origin:0 50%;">bean, so @Value fields (jwt.secret, expiration) will be</div>
<div class="t" id="f84" style="left:1603.5px;top:1014.5px;color:#DFE1E5;font-size:14px;;transform:scaleX(1.0238);transform-origin:0 50%;">null/default, causing runtime failures when</div>
<div class="t" id="f85" style="left:1603.5px;top:1031.5px;color:#DFE1E5;font-size:14px;;transform:scaleX(1.0185);transform-origin:0 50%;">generating or parsing tokens.</div>
<div class="r" style="left:1940px;top:729px;width:7px;height:30px;background:#45474B;border-radius:3px"></div>
<div class="r" style="left:0px;top:1135px;width:1994px;height:1px;background:#1E1F22;"></div>
<div class="r" style="left:0px;top:1136px;width:1994px;height:26px;background:#2B2D30;"></div>
<svg class="r" style="left:10px;top:1143px" width="12" height="12" viewBox="0 0 12 12" fill="none"><rect x="1.5" y="2" width="8" height="8" rx="1.5" stroke="#548AF7" stroke-width="1.2"/></svg>
<div class="t" id="f86" style="left:24.9px;top:1139px;color:#A8ADBD;font-size:14px;;transform:scaleX(1.0253);transform-origin:0 50%;">2024-newworkspace -AI - qtjambi64</div>
<div class="t" id="f87" style="left:278.3px;top:1139px;color:#A8ADBD;font-size:14px;;transform:scaleX(0.9902);transform-origin:0 50%;">GlowForge</div>
<div class="t" id="f88" style="left:371.6px;top:1139px;color:#A8ADBD;font-size:14px;;transform:scaleX(0.9992);transform-origin:0 50%;">CreatorGlow Marketplace</div>
<div class="t" id="f89" style="left:555.7px;top:1139px;color:#A8ADBD;font-size:14px;;transform:scaleX(0.9747);transform-origin:0 50%;">backend</div>
<div class="t" id="f90" style="left:632.1px;top:1139px;color:#A8ADBD;font-size:14px;;transform:scaleX(0.9962);transform-origin:0 50%;">src</div>
<div class="t" id="f91" style="left:675.4px;top:1139px;color:#A8ADBD;font-size:14px;;transform:scaleX(0.9190);transform-origin:0 50%;">main</div>
<div class="t" id="f92" style="left:727.7px;top:1139px;color:#A8ADBD;font-size:14px;;transform:scaleX(0.9382);transform-origin:0 50%;">java</div>
<div class="t" id="f93" style="left:775.9px;top:1139px;color:#A8ADBD;font-size:14px;;transform:scaleX(0.9677);transform-origin:0 50%;">com</div>
<div class="t" id="f94" style="left:826.3px;top:1139px;color:#A8ADBD;font-size:14px;;transform:scaleX(1.0183);transform-origin:0 50%;">creatorglow</div>
<div class="t" id="f95" style="left:925.1px;top:1139px;color:#A8ADBD;font-size:14px;;transform:scaleX(0.9847);transform-origin:0 50%;">marketplace</div>
<div class="t" id="f96" style="left:1045.4px;top:1139px;color:#A8ADBD;font-size:14px;;transform:scaleX(0.9941);transform-origin:0 50%;">MarketplaceApplication.java</div>
<svg class="r" style="left:259.7px;top:1143px" width="12" height="12" viewBox="0 0 12 12" fill="none"><path d="M4.5 2.5 L8 6 L4.5 9.5" stroke="#8C8F96" stroke-width="1.1" stroke-linecap="round" stroke-linejoin="round"/></svg>
<svg class="r" style="left:352.3px;top:1143px" width="12" height="12" viewBox="0 0 12 12" fill="none"><path d="M4.5 2.5 L8 6 L4.5 9.5" stroke="#8C8F96" stroke-width="1.1" stroke-linecap="round" stroke-linejoin="round"/></svg>
<svg class="r" style="left:536.4px;top:1143px" width="12" height="12" viewBox="0 0 12 12" fill="none"><path d="M4.5 2.5 L8 6 L4.5 9.5" stroke="#8C8F96" stroke-width="1.1" stroke-linecap="round" stroke-linejoin="round"/></svg>
<svg class="r" style="left:613.7px;top:1143px" width="12" height="12" viewBox="0 0 12 12" fill="none"><path d="M4.5 2.5 L8 6 L4.5 9.5" stroke="#8C8F96" stroke-width="1.1" stroke-linecap="round" stroke-linejoin="round"/></svg>
<svg class="r" style="left:656.4px;top:1143px" width="12" height="12" viewBox="0 0 12 12" fill="none"><path d="M4.5 2.5 L8 6 L4.5 9.5" stroke="#8C8F96" stroke-width="1.1" stroke-linecap="round" stroke-linejoin="round"/></svg>
<svg class="r" style="left:709.3px;top:1143px" width="12" height="12" viewBox="0 0 12 12" fill="none"><path d="M4.5 2.5 L8 6 L4.5 9.5" stroke="#8C8F96" stroke-width="1.1" stroke-linecap="round" stroke-linejoin="round"/></svg>
<svg class="r" style="left:757.5px;top:1143px" width="12" height="12" viewBox="0 0 12 12" fill="none"><path d="M4.5 2.5 L8 6 L4.5 9.5" stroke="#8C8F96" stroke-width="1.1" stroke-linecap="round" stroke-linejoin="round"/></svg>
<svg class="r" style="left:807.2px;top:1143px" width="12" height="12" viewBox="0 0 12 12" fill="none"><path d="M4.5 2.5 L8 6 L4.5 9.5" stroke="#8C8F96" stroke-width="1.1" stroke-linecap="round" stroke-linejoin="round"/></svg>
<svg class="r" style="left:905.7px;top:1143px" width="12" height="12" viewBox="0 0 12 12" fill="none"><path d="M4.5 2.5 L8 6 L4.5 9.5" stroke="#8C8F96" stroke-width="1.1" stroke-linecap="round" stroke-linejoin="round"/></svg>
<svg class="r" style="left:1005.5px;top:1143px" width="12" height="12" viewBox="0 0 12 12" fill="none"><path d="M4.5 2.5 L8 6 L4.5 9.5" stroke="#8C8F96" stroke-width="1.1" stroke-linecap="round" stroke-linejoin="round"/></svg>
<svg class="r" style="left:1025px;top:1141px" width="16" height="16" viewBox="0 0 16 16" fill="none"><path d="M1.7 2.7 H11.2 V8.3 Q11.2 11.1 8.4 11.1 H4.5 Q1.7 11.1 1.7 8.3 Z" stroke="#DB8556" stroke-width="1.3" fill="#45302A"/><path d="M11.2 2.7 H13.9 V5.7 H11.2" stroke="#DB8556" stroke-width="1.1"/><path d="M1 13.6 H12.6" stroke="#DB8556" stroke-width="1.2"/></svg>
<div class="t" id="f97" style="left:1722.3px;top:1139px;color:#A8ADBD;font-size:14px;;transform:scaleX(0.8218);transform-origin:0 50%;">1:1</div>
<div class="t" id="f98" style="left:1754.4px;top:1139px;color:#A8ADBD;font-size:14px;;transform:scaleX(0.8479);transform-origin:0 50%;">CRLF</div>
<div class="t" id="f99" style="left:1802.6px;top:1139px;color:#A8ADBD;font-size:14px;;transform:scaleX(0.9931);transform-origin:0 50%;">UTF-8</div>
<div class="t" id="f100" style="left:1859px;top:1139px;color:#A8ADBD;font-size:14px;;transform:scaleX(0.9724);transform-origin:0 50%;">4 spaces</div>
<svg class="r" style="left:1931px;top:1141px" width="16" height="16" viewBox="0 0 16 16" fill="none"><rect x="2.5" y="7.5" width="9" height="7" rx="1" stroke="#A8ADBD" stroke-width="1.1"/><path d="M9 7.5 V5 Q9 2.5 11.5 2.5 Q14 2.5 14 5 V6" stroke="#A8ADBD" stroke-width="1.1"/></svg>
<svg class="r" style="left:1962px;top:1142px" width="16" height="16" viewBox="0 0 16 16" fill="none"><circle cx="8" cy="8" r="6.8" stroke="#A8ADBD" stroke-width="1.1"/><path d="M8 4 V9" stroke="#A8ADBD" stroke-width="1.5"/><circle cx="8" cy="11.5" r="0.9" fill="#A8ADBD"/></svg>
</body></html>
